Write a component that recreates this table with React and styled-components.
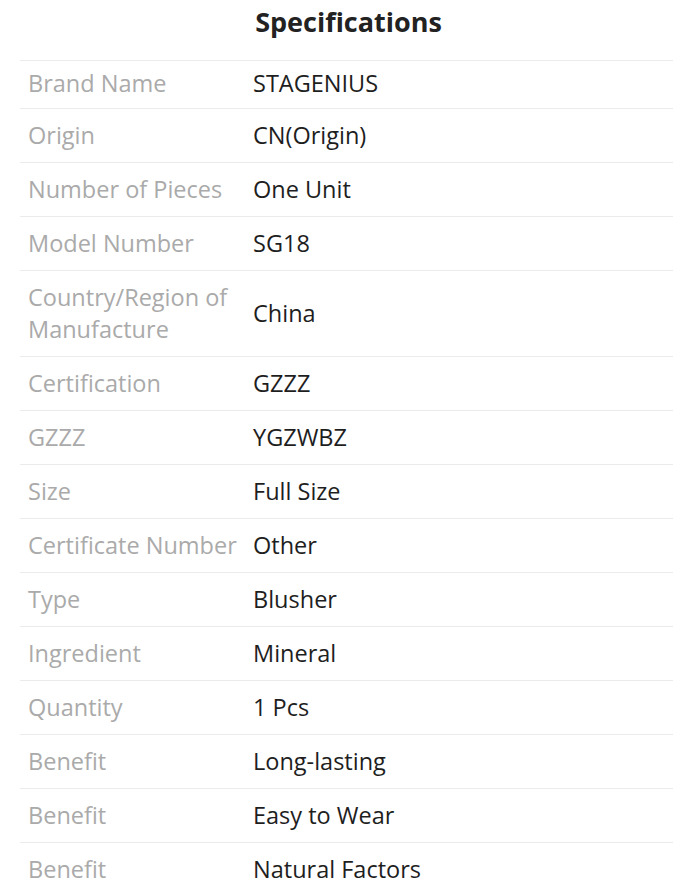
import React from 'react'
import styled, { createGlobalStyle } from 'styled-components'

const GlobalStyle = createGlobalStyle`
  body {
    margin: 0;
    background: #ffffff;
    font-family: "Open Sans", "Liberation Sans", sans-serif;
  }
`

const Page = styled.div`
  width: 700px;
  padding: 0 27px 0 20px;
  box-sizing: border-box;
`

const Title = styled.h2`
  margin: 0;
  height: 60px;
  line-height: 44px;
  text-align: center;
  font-size: 27px;
  font-weight: 700;
  color: #222222;
  padding-left: 4px;
  box-sizing: border-box;
`

const Table = styled.div`
  display: flex;
  flex-direction: column;
  border-top: 1px solid #ebebeb;
`

const Row = styled.div`
  display: flex;
  align-items: center;
  padding: ${p => (p.$tight ? '6px 0 9px' : '10px 0 11px')};
  border-bottom: 1px solid #ebebeb;
  font-size: 23.5px;
  line-height: 32px;
`

const Label = styled.div`
  flex: 0 0 217px;
  padding: 0 8px;
  color: #aaaaaa;
`

const Value = styled.div`
  flex: 1;
  color: #1e1e1e;
`

const specs = [
  ['Brand Name', 'STAGENIUS'],
  ['Origin', 'CN(Origin)'],
  ['Number of Pieces', 'One Unit'],
  ['Model Number', 'SG18'],
  ['Country/Region of Manufacture', 'China'],
  ['Certification', 'GZZZ'],
  ['GZZZ', 'YGZWBZ'],
  ['Size', 'Full Size'],
  ['Certificate Number', 'Other'],
  ['Type', 'Blusher'],
  ['Ingredient', 'Mineral'],
  ['Quantity', '1 Pcs'],
  ['Benefit', 'Long-lasting'],
  ['Benefit', 'Easy to Wear'],
  ['Benefit', 'Natural Factors']
]

export default function App() {
  return (
    <Page>
      <GlobalStyle />
      <Title>Specifications</Title>
      <Table>
        {specs.map(([label, value], i) => (
          <Row key={i} $tight={i === 0}>
            <Label>{label}</Label>
            <Value>{value}</Value>
          </Row>
        ))}
      </Table>
    </Page>
  )
}
